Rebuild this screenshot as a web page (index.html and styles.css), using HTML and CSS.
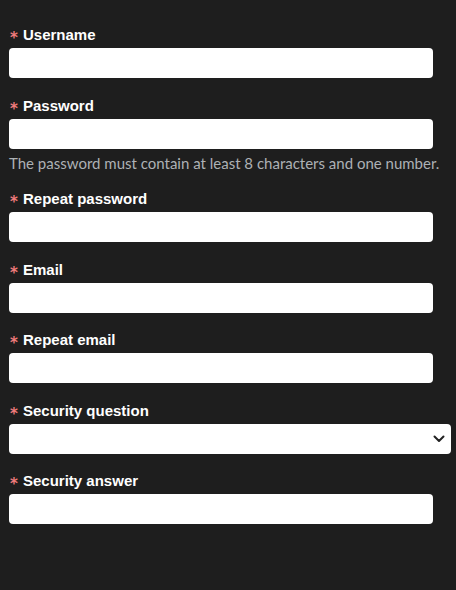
FILE: index.html
```html
<!DOCTYPE html>
<html lang="en">
<head>
    <meta charset="UTF-8">
    <meta name="viewport" content="width=device-width, initial-scale=1.0">
    <title>Register</title>
    <link rel="stylesheet" href="styles.css">
</head>
<body>
    <form class="register-form">
        <div class="field">
            <label for="username"><span class="req">*</span>Username</label>
            <input type="text" id="username">
        </div>
        <div class="field">
            <label for="password"><span class="req">*</span>Password</label>
            <input type="password" id="password">
            <p class="hint">The password must contain at least 8 characters and one number.</p>
        </div>
        <div class="field">
            <label for="password2"><span class="req">*</span>Repeat password</label>
            <input type="password" id="password2">
        </div>
        <div class="field">
            <label for="email"><span class="req">*</span>Email</label>
            <input type="text" id="email">
        </div>
        <div class="field">
            <label for="email2"><span class="req">*</span>Repeat email</label>
            <input type="text" id="email2">
        </div>
        <div class="field">
            <label for="question"><span class="req">*</span>Security question</label>
            <div class="select-wrap">
                <select id="question">
                    <option></option>
                </select>
                <svg class="chevron" width="12" height="8" viewBox="0 0 12 8"><path d="M1.5 1.5 L6 6 L10.5 1.5" fill="none" stroke="#222" stroke-width="2" stroke-linecap="round" stroke-linejoin="round"/></svg>
            </div>
        </div>
        <div class="field">
            <label for="answer"><span class="req">*</span>Security answer</label>
            <input type="text" id="answer">
        </div>
    </form>
</body>
</html>
```

FILE: styles.css
```css
body {
    margin: 0;
    background-color: #1e1e1e;
    font-family: "Liberation Sans", Arial, sans-serif;
    color: #fff;
}
.register-form {
    padding: 26px 23px 0 9px;
}
.field {
    margin-bottom: 18.5px;
}
label {
    display: block;
    height: 18px;
    line-height: 18px;
    margin-bottom: 4px;
    font-size: 15px;
    font-weight: bold;
    color: #fff;
}
.req {
    display: inline-block;
    width: 14px;
    padding-left: 1px;
    box-sizing: border-box;
    color: #ef7b7b;
    font-family: "DejaVu Sans", sans-serif;
    font-size: 15px;
    font-weight: bold;
    line-height: 18px;
    vertical-align: -3px;
}
input[type="text"], input[type="password"] {
    display: block;
    width: 100%;
    height: 30px;
    border: none;
    border-radius: 4px;
    background: #fff;
    box-sizing: border-box;
    padding: 0 8px;
}
.hint {
    margin: 3px 0 -2px 0;
    height: 22px;
    line-height: 22px;
    font-family: Lato, sans-serif;
    font-size: 15px;
    color: #adb1b5;
    white-space: nowrap;
}
.select-wrap {
    position: relative;
    margin-right: -18px;
}
select {
    display: block;
    width: 100%;
    height: 30px;
    border: none;
    border-radius: 4px;
    background: #fff;
    appearance: none;
    -webkit-appearance: none;
    box-sizing: border-box;
}
.chevron {
    position: absolute;
    right: 6px;
    top: 11px;
    pointer-events: none;
}
```
